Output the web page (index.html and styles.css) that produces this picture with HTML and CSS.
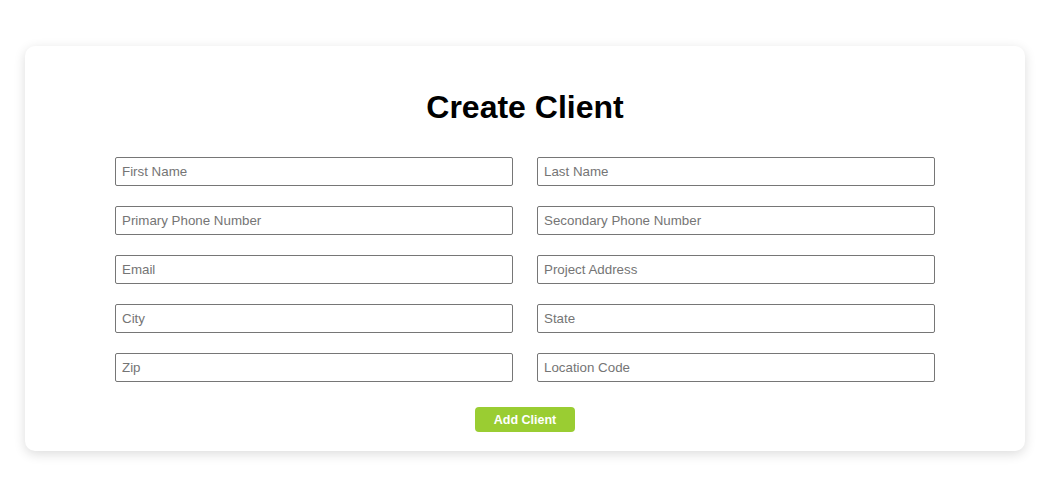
FILE: index.html
```html
<!DOCTYPE html>
<html>
<head>
<meta charset="utf-8">
<link rel="stylesheet" href="styles.css">
</head>
<body>
<div class="card">
  <h1 class="title">Create Client</h1>
  <form class="form">
    <div class="grid">
      <input class="field" type="text" placeholder="First Name">
      <input class="field" type="text" placeholder="Last Name">
      <input class="field" type="text" placeholder="Primary Phone Number">
      <input class="field" type="text" placeholder="Secondary Phone Number">
      <input class="field" type="text" placeholder="Email">
      <input class="field" type="text" placeholder="Project Address">
      <input class="field" type="text" placeholder="City">
      <input class="field" type="text" placeholder="State">
      <input class="field" type="text" placeholder="Zip">
      <input class="field" type="text" placeholder="Location Code">
    </div>
    <div class="actions">
      <button class="btn" type="button">Add Client</button>
    </div>
  </form>
</div>
</body>
</html>
```

FILE: styles.css
```css
html, body {
  margin: 0;
  padding: 0;
  background: #ffffff;
  font-family: "Liberation Sans", Arial, sans-serif;
}

body {
  padding: 46px 34px 42px 25px;
}

.card {
  width: 1000px;
  box-sizing: border-box;
  height: 405px;
  background: #ffffff;
  border-radius: 10px;
  box-shadow: 0 3px 12px rgba(0, 0, 0, 0.14);
  padding: 43px 90px 0 90px;
}

.title {
  margin: 0;
  font-size: 32px;
  line-height: 36px;
  font-weight: bold;
  text-align: center;
  color: #000000;
}

.form {
  margin-top: 32px;
}

.grid {
  display: grid;
  grid-template-columns: 398px 398px;
  column-gap: 24px;
  row-gap: 20px;
}

.field {
  box-sizing: border-box;
  height: 29px;
  width: 398px;
  margin: 0;
  padding: 0 6px;
  border: 1px solid #767676;
  border-radius: 2px;
  font-family: "Liberation Sans", Arial, sans-serif;
  font-size: 13.33px;
  color: #000;
  background: #fff;
}

.field::placeholder {
  color: #757575;
}

.actions {
  display: flex;
  justify-content: center;
  margin-top: 25px;
}

.btn {
  width: 100px;
  height: 25px;
  padding: 0;
  border: none;
  border-radius: 4px;
  background: #9acd32;
  color: #ffffff;
  font-family: "Liberation Sans", Arial, sans-serif;
  font-weight: bold;
  font-size: 12.5px;
  cursor: pointer;
}
```
